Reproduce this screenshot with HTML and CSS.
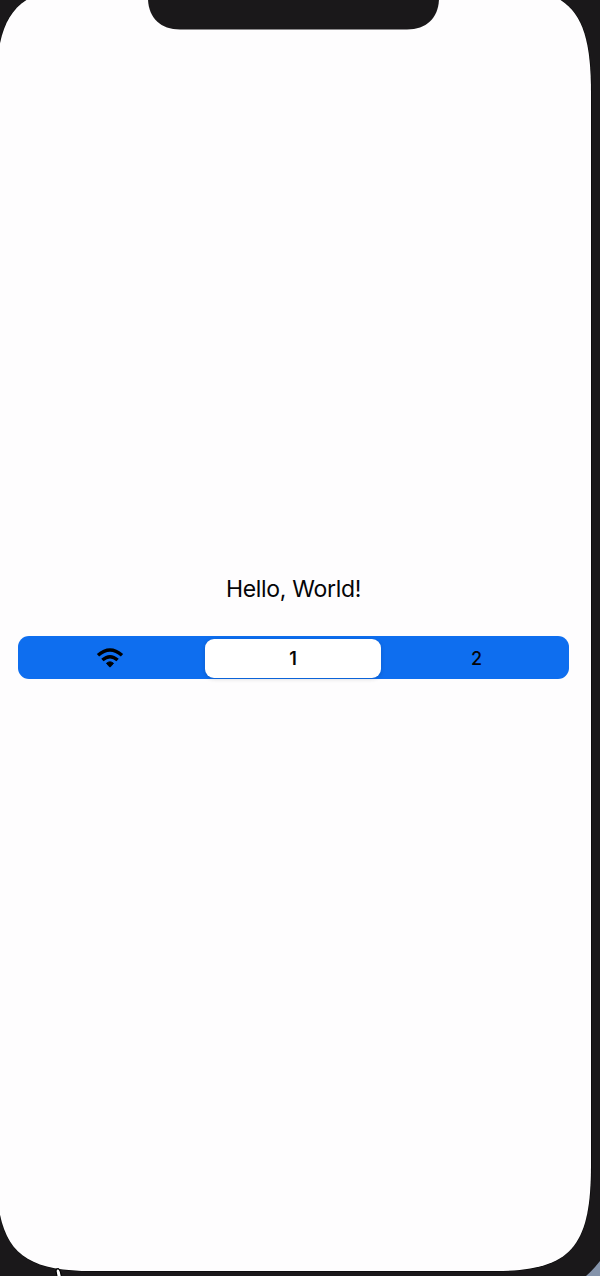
FILE: index.html
```html
<!DOCTYPE html>
<html lang="en">
<head>
<meta charset="utf-8">
<title>Hello, World!</title>
<link rel="stylesheet" href="styles.css">
</head>
<body>
<div class="device">
  <svg class="frame" viewBox="0 0 600 1276" aria-hidden="true">
    <path class="backdrop" d="M600 1261V1276H586Q593 1270 600 1261Z"/>
    <path class="screen" d="M92 -13H495C571 -13 591 11 591 93V1165C591 1247 571 1271 495 1271H92C16 1271 -4 1247 -4 1165V93C-4 11 16 -13 92 -13Z"/>
    <path class="notch" d="M148 -2C148 17 160 29.5 180 29.5H407C427 29.5 439 17 439 -2Z"/>
    <path class="pointer" d="M57.3 1278L56 1271Q56 1268.6 58.2 1268.6Q60.6 1269.4 61.6 1278"/>
  </svg>
  <main class="content">
    <h1 class="title">Hello, World!</h1>
    <div class="segments" role="tablist">
      <div class="segment" role="tab" aria-label="Wi-Fi">
        <svg class="wifi" viewBox="0 0 28 20" aria-hidden="true">
          <path d="M2 7.2Q14 -3.2 26 7.2"/>
          <path d="M6.4 12Q14 5.4 21.6 12"/>
          <path class="dot" d="M10.4 15.3Q14 12.2 17.6 15.3L14.6 18.7Q14 19.4 13.4 18.7Z"/>
        </svg>
      </div>
      <div class="segment selected" role="tab" aria-selected="true">1</div>
      <div class="segment last" role="tab">2</div>
    </div>
  </main>
</div>
</body>
</html>
```
FILE: styles.css
```css
body {
  margin: 0;
}

.device {
  position: relative;
  width: 600px;
  height: 1276px;
  overflow: hidden;
  background: #1a181a;
  color: #050507;
  font-family: Inter, "Liberation Sans", sans-serif;
}

.frame {
  position: absolute;
  inset: 0;
  width: 600px;
  height: 1276px;
}

.backdrop {
  fill: #8594ab;
}

.screen {
  fill: #fefdfe;
  stroke: #000;
  stroke-width: 1;
  paint-order: stroke;
}

.notch {
  fill: #1a181a;
}

.pointer {
  fill: #fff;
  stroke: #000;
  stroke-width: 1.2;
}

.content {
  position: relative;
  box-sizing: border-box;
  width: 587px;
  padding: 573px 18px 0;
}

.title {
  margin: 0;
  font-size: 23px;
  font-weight: 400;
  line-height: 32px;
  letter-spacing: -0.3px;
  text-align: center;
}

.segments {
  display: grid;
  grid-template-columns: 187px 176px 1fr;
  box-sizing: border-box;
  height: 43px;
  margin-top: 31px;
  padding: 2.5px 0 1.5px;
  border-radius: 11px;
  background: #0e6eef;
}

.segment {
  display: flex;
  align-items: center;
  justify-content: center;
  font-size: 18px;
  font-weight: 500;
}

.selected {
  border-radius: 9px;
  background: #fff;
  box-shadow: 0 1px 4px rgba(0, 0, 0, 0.16);
  font-weight: 600;
}

.last {
  padding-left: 3px;
}

.wifi {
  width: 28px;
  height: 20px;
  margin-right: 4px;
  fill: none;
  stroke: #000;
  stroke-width: 3.5;
}

.wifi .dot {
  fill: #000;
  stroke-width: 0.8;
  stroke-linejoin: round;
}
```
